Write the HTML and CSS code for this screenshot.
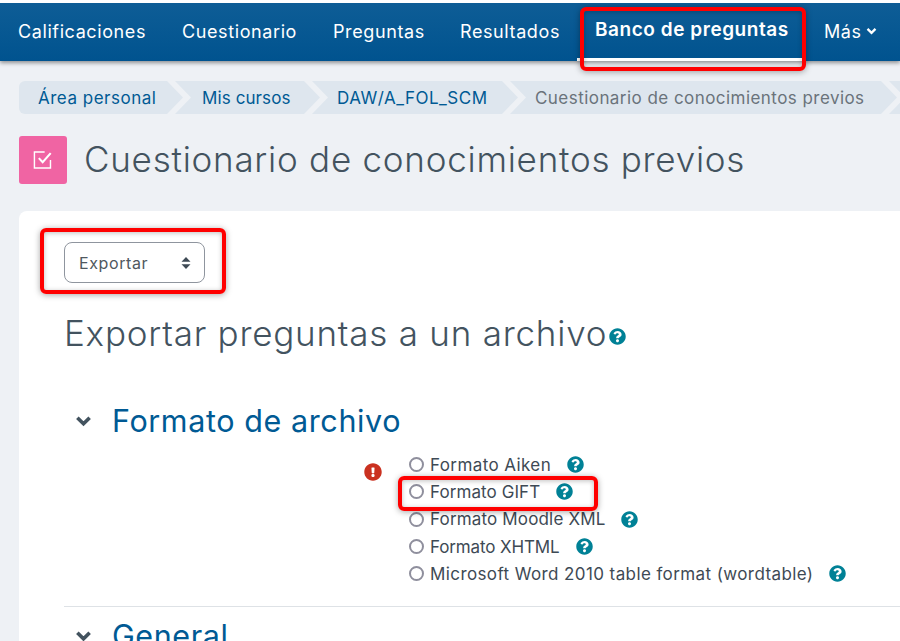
FILE: index.html
```html
<!DOCTYPE html>
<html lang="es">
<head>
<meta charset="utf-8">
<title>Cuestionario de conocimientos previos</title>
<link rel="stylesheet" href="styles.css">
</head>
<body>
<svg class="defs" width="0" height="0" aria-hidden="true">
  <symbol id="q" viewBox="0 0 512 512"><path d="M504 256c0 136.997-111.043 248-248 248S8 392.997 8 256C8 119.083 119.043 8 256 8s248 111.083 248 248zM262.655 90c-54.497 0-89.255 22.957-121.602 63.201-4.191 5.214-3.065 12.874 2.175 16.83l34.699 26.31c5.325 4.038 12.912 3.077 17.054-2.182 17.864-22.658 30.113-35.797 57.303-35.797 20.429 0 45.698 13.148 45.698 32.958 0 14.976-12.363 22.667-32.534 33.976C247.128 238.528 216 254.941 216 296v4c0 6.627 5.373 12 12 12h56c6.627 0 12-5.373 12-12v-1.333c0-28.462 83.186-29.647 83.186-106.667 0-58.002-60.165-102-116.531-102zM256 338c-25.365 0-46 20.635-46 46 0 25.364 20.635 46 46 46s46-20.636 46-46c0-25.365-20.635-46-46-46z"/></symbol>
  <symbol id="chev" viewBox="0 0 18 12"><path d="M2.500 2.500 9 9l6.500-6.500" fill="none" stroke="currentColor" stroke-width="3.800"/></symbol>
</svg>

<nav class="topnav">
  <a class="tab tab-cal">Calificaciones</a>
  <a class="tab tab-cue">Cuestionario</a>
  <a class="tab tab-pre">Preguntas</a>
  <a class="tab tab-res">Resultados</a>
  <a class="tab tab-active">Banco de preguntas</a>
  <a class="tab tab-mas">Más <svg class="mas-chev"><use href="#chev"/></svg></a>
</nav>

<ol class="crumbs">
  <li class="crumb crumb-1">Área personal</li>
  <li class="crumb crumb-2">Mis cursos</li>
  <li class="crumb crumb-3">DAW/A_FOL_SCM</li>
  <li class="crumb crumb-4">Cuestionario de conocimientos previos</li>
  <li class="crumb crumb-5"></li>
</ol>

<header class="pagehead">
  <span class="quiz-icon">
    <svg viewBox="0 0 20 20" width="22" height="22"><path d="M11.500 2.700H2.200v14.600h14.600V10" fill="none" stroke="#fff" stroke-width="1.300"/><path d="M6.200 8.300 9.700 12 17 3.700" fill="none" stroke="#fff" stroke-width="1.900"/></svg>
  </span>
  <h1 class="pagetitle">Cuestionario de conocimientos previos</h1>
</header>

<main class="card">
  <div class="select">
    <span class="select-label">Exportar</span>
    <svg class="select-caret" viewBox="0 0 10 14" width="10" height="14"><path d="M5 1 9.500 5.700H.5zM5 13 .5 8.300h9z" fill="#3e4a55"/></svg>
  </div>

  <h2 class="heading">Exportar preguntas a un archivo<svg class="help help-h"><use href="#q"/></svg></h2>

  <section class="fieldset">
    <h3 class="legend"><svg class="legend-chev"><use href="#chev"/></svg>Formato de archivo</h3>
    <div class="formats">
      <svg class="error-icon" viewBox="0 0 512 512"><path d="M504 256c0 136.997-111.043 248-248 248S8 392.997 8 256C8 119.083 119.043 8 256 8s248 111.083 248 248zm-248 50c-25.405 0-46 20.595-46 46s20.595 46 46 46 46-20.595 46-46-20.595-46-46-46zm-43.673-165.346l7.418 136c.347 6.364 5.609 11.346 11.982 11.346h48.546c6.373 0 11.635-4.982 11.982-11.346l7.418-136c.375-6.874-5.098-12.654-11.982-12.654h-63.383c-6.884 0-12.356 5.780-11.981 12.654z"/></svg>
      <ul class="options">
        <li class="option"><span class="radio"></span><span class="opt-label opt-aiken">Formato Aiken</span><svg class="help"><use href="#q"/></svg></li>
        <li class="option"><span class="radio"></span><span class="opt-label opt-gift">Formato GIFT</span><svg class="help"><use href="#q"/></svg></li>
        <li class="option"><span class="radio"></span><span class="opt-label opt-moodle">Formato Moodle XML</span><svg class="help"><use href="#q"/></svg></li>
        <li class="option"><span class="radio"></span><span class="opt-label opt-xhtml">Formato XHTML</span><svg class="help"><use href="#q"/></svg></li>
        <li class="option"><span class="radio"></span><span class="opt-label opt-word">Microsoft Word 2010 table format (wordtable)</span><svg class="help"><use href="#q"/></svg></li>
      </ul>
    </div>
  </section>

  <section class="fieldset fieldset-next">
    <h3 class="legend"><svg class="legend-chev"><use href="#chev"/></svg>General</h3>
  </section>
</main>

<div class="mark mark-tab"></div>
<div class="mark mark-select"></div>
<div class="mark mark-gift"></div>
</body>
</html>
```

FILE: styles.css
```css
* { box-sizing: border-box; }
html, body { margin: 0; height: 641px; overflow: hidden; }
body {
  position: relative;
  background: #eef1f5;
  font-family: Inter, "Open Sans", sans-serif;
  color: #3e4a55;
  border-top: 3px solid #fff;
}
.defs { position: absolute; }

/* top navigation */
.topnav {
  height: 58px;
  display: flex;
  align-items: center;
  padding-left: 18px;
  padding-bottom: 2px;
  background: linear-gradient(#0e5d96, #00538f);
  box-shadow: 0 2px 4px rgba(0, 0, 0, .4);
  position: relative;
  color: #fff;
  font-size: 18px;
  letter-spacing: .6px;
}
.tab { display: block; white-space: nowrap; flex: none; }
.tab-cal { width: 164px; }
.tab-cue { width: 151px; }
.tab-pre { width: 127px; }
.tab-res { width: 117px; }
.tab-active {
  width: 225px;
  margin-right: 22px;
  margin-bottom: -2px;
  padding-left: 18px;
  font-weight: 600;
  font-size: 19px;
  letter-spacing: .55px;
  align-self: stretch;
  line-height: 54px;
  border-bottom: 3px solid #fff;
}
.tab-mas { display: flex; align-items: center; gap: 4px; }
.mas-chev { width: 11px; height: 8px; }

/* breadcrumb */
.crumbs {
  list-style: none;
  margin: 20px 0 0;
  padding: 0 0 0 19px;
  display: flex;
  height: 33px;
  font-size: 17px;
  letter-spacing: .5px;
  color: #005a94;
}
.crumb {
  flex: none;
  line-height: 34px;
  background: #dee6ee;
  margin-right: -8px;
  white-space: nowrap;
  clip-path: polygon(0 0, calc(100% - 16px) 0, 100% 50%, calc(100% - 16px) 100%, 0 100%, 16px 50%);
}
.crumb-1 {
  width: 164px;
  padding-left: 19px;
  border-radius: 6px 0 0 6px;
  clip-path: polygon(0 0, calc(100% - 16px) 0, 100% 50%, calc(100% - 16px) 100%, 0 100%);
}
.crumb-2 { width: 145px; padding-left: 27px; letter-spacing: .1px; }
.crumb-3 { width: 206px; padding-left: 25px; }
.crumb-4 { width: 387px; padding-left: 25px; color: #6a737b; letter-spacing: .45px; }
.crumb-5 { width: 60px; }

/* page header */
.pagehead {
  margin: 22px 0 0 19px;
  display: flex;
  align-items: center;
  gap: 17px;
  height: 48px;
}
.quiz-icon {
  flex: none;
  width: 48px;
  height: 48px;
  border-radius: 3px;
  background: #f064a3;
  display: flex;
  align-items: center;
  justify-content: center;
}
.pagetitle {
  margin: 0 0 3px;
  font-size: 35px;
  font-weight: 300;
  color: #43535f;
  white-space: nowrap;
  letter-spacing: .75px;
}

/* card */
.card {
  margin: 27px 0 0 19px;
  height: 500px;
  background: #fff;
  border-radius: 8px 0 0 0;
  padding: 31px 0 0 45px;
}
.select {
  width: 141px;
  height: 41px;
  border: 1px solid #8f959e;
  border-radius: 8px;
  display: flex;
  align-items: center;
  justify-content: space-between;
  padding: 0 13px 0 14px;
  font-size: 16px;
  letter-spacing: .6px;
  color: #4f5860;
}
.heading {
  margin: 26px 0 0;
  font-size: 35px;
  line-height: 48px;
  font-weight: 300;
  color: #43535f;
  white-space: nowrap;
  letter-spacing: .77px;
  display: flex;
  align-items: center;
  gap: 2px;
}
.help { flex: none; width: 17px; height: 17px; fill: #008196; }
.help-h { position: relative; top: 3px; }

.legend {
  margin: 43px 0 0 11px;
  display: flex;
  align-items: center;
  gap: 20px;
  font-size: 30.500px;
  line-height: 42px;
  font-weight: 400;
  color: #005a94;
  white-space: nowrap;
  letter-spacing: .6px;
}
.legend-chev { width: 17px; height: 12px; color: #43535f; flex: none; }

.formats {
  position: relative;
  margin-top: 9px;
  padding-left: 345px;
  padding-bottom: 19px;
  border-bottom: 1px solid #dee2e6;
}
.error-icon {
  position: absolute;
  left: 300px;
  top: 12px;
  width: 18px;
  height: 18px;
  fill: #ca3120;
}
.options { list-style: none; margin: 0; padding: 0; }
.option {
  height: 27.300px;
  display: flex;
  align-items: center;
  font-size: 17px;
  color: #3e4a55;
  white-space: nowrap;
}
.radio {
  flex: none;
  width: 15px;
  height: 15px;
  margin-right: 6px;
  border: 2px solid #8f8f9d;
  border-radius: 50%;
  background: #fff;
}
.opt-label { margin-right: 16px; }
.opt-aiken { letter-spacing: .4px; }
.opt-gift { letter-spacing: .08px; }
.opt-moodle { letter-spacing: .16px; }
.opt-xhtml { letter-spacing: -.13px; }
.opt-word { letter-spacing: .4px; }
.fieldset-next .legend { margin-top: 8px; }

/* red annotation frames drawn over the screenshot */
.mark {
  position: absolute;
  border: 4px solid #f00;
  border-radius: 6px;
  box-shadow: 0 1px 6px rgba(0, 0, 0, .35), inset 0 1px 5px rgba(0, 0, 0, .25);
}
.mark-tab { left: 580px; top: 4px; width: 226px; height: 64px; }
.mark-select { left: 40px; top: 225px; width: 186px; height: 66px; }
.mark-gift { left: 398px; top: 473px; width: 200px; height: 35px; }
```
